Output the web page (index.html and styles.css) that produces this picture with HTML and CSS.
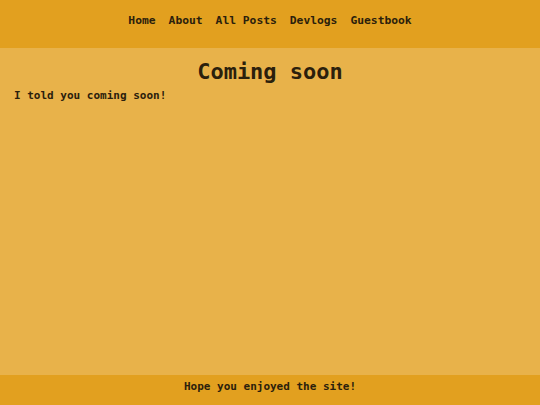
FILE: index.html
```html
<!DOCTYPE html>
<html>
<head>
<meta charset="utf-8">
<link rel="stylesheet" href="styles.css">
</head>
<body>
<div class="page">
  <header class="header">
    <nav class="nav">
      <a href="#">Home</a>
      <a href="#">About</a>
      <a href="#">All Posts</a>
      <a href="#">Devlogs</a>
      <a href="#">Guestbook</a>
    </nav>
  </header>
  <main class="main">
    <h1 class="title">Coming soon</h1>
    <p class="text">I told you coming soon!</p>
  </main>
  <footer class="footer">Hope you enjoyed the site!</footer>
</div>
</body>
</html>
```
FILE: styles.css
```css
html, body {
  margin: 0;
  padding: 0;
  height: 100%;
}
body {
  background: #e8b24a;
  color: #2b200c;
  font-family: "DejaVu Sans Mono", "Liberation Mono", monospace;
  font-weight: bold;
}
.page {
  display: flex;
  flex-direction: column;
  height: 405px;
}
.header {
  background: #e2a01f;
  height: 48px;
  display: flex;
  justify-content: center;
  padding-top: 14px;
  box-sizing: border-box;
}
.nav {
  display: flex;
  gap: 13px;
  font-size: 11.3px;
  line-height: 14px;
}
.nav a {
  color: #2b200c;
  text-decoration: none;
}
.main {
  flex: 1;
  padding: 0 14px;
}
.title {
  margin: 12px 0 0;
  text-align: center;
  font-size: 22px;
  line-height: 24px;
  font-weight: bold;
}
.text {
  margin: 5px 0 0;
  font-size: 11px;
  line-height: 14px;
}
.footer {
  background: #e2a01f;
  height: 30px;
  box-sizing: border-box;
  padding-top: 5px;
  text-align: center;
  font-size: 11px;
  line-height: 14px;
}
```
